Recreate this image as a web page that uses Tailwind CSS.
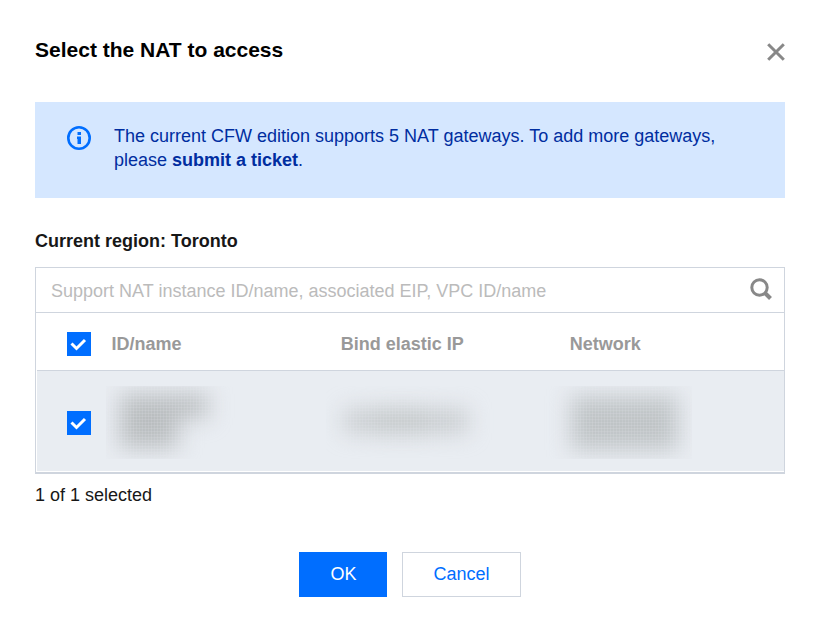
<!DOCTYPE html>
<html lang="en">
<head>
<meta charset="utf-8">
<meta name="viewport" content="width=device-width, initial-scale=1">
<title>Select the NAT to access</title>
<script src="https://cdn.jsdelivr.net/npm/@tailwindcss/browser@4"></script>
</head>
<body class="bg-white font-['Helvetica_Neue','Liberation_Sans',Arial,sans-serif] text-[18px] leading-6 text-[#171717]">
<main role="dialog" aria-labelledby="title" class="px-[35px] pt-9 pb-8">
  <header class="flex items-start justify-between">
    <h1 id="title" class="text-[21px] leading-7 font-bold text-black">Select the NAT to access</h1>
    <button type="button" aria-label="Close" class="mt-[7px] cursor-pointer text-[#888]">
      <svg class="block" width="18" height="18" viewBox="0 0 18 18" fill="none" stroke="currentColor" stroke-width="3"><path d="M1.2 1.2 16.8 16.8M16.8 1.2 1.2 16.8"/></svg>
    </button>
  </header>

  <section class="mt-[38px] flex gap-[23px] bg-[#d5e7ff] px-8 pt-6 pb-[26px] text-[#002da0]">
    <svg class="block shrink-0" width="24" height="24" viewBox="0 0 24 24" fill="none"><circle cx="12" cy="12" r="10.700" stroke="#006eff" stroke-width="2.600"/><path d="M10.500 6h3.500v3h-3.500zM10 10.500h4V18h-3.500v-5H10z" fill="#006eff"/></svg>
    <p class="-mt-0.5">The current CFW edition supports 5 NAT gateways. To add more gateways, please <a href="#" class="font-bold">submit a ticket</a>.</p>
  </section>

  <h2 class="mt-[31px] font-bold">Current region: Toronto</h2>

  <section class="mt-[14px] border border-b-2 border-[#cfd5de]">
    <div class="flex h-[45px] items-center border-b border-[#cfd5de] pr-3 pl-[15px]">
      <input type="search" aria-label="Search NAT instances" placeholder="Support NAT instance ID/name, associated EIP, VPC ID/name" class="h-full min-w-0 flex-1 bg-transparent pt-0.5 outline-none placeholder:text-[#bbb]">
      <button type="button" aria-label="Search" class="cursor-pointer pb-0.5 text-[#888]">
        <svg class="block" width="22" height="22" viewBox="0 0 22 22" fill="none" stroke="currentColor"><circle cx="9.500" cy="9.500" r="7.700" stroke-width="3"/><path d="m15 15 5.500 5.500" stroke-width="4"/></svg>
      </button>
    </div>
    <table class="w-full table-fixed border-collapse text-left">
      <colgroup><col class="w-[60px]"><col><col><col></colgroup>
      <thead>
        <tr class="h-[57px] border-b border-[#cfd5de] text-[#999]">
          <th class="pt-[5px] pl-[30px]">
            <label class="grid size-6"><input type="checkbox" checked aria-label="Select all" class="peer col-start-1 row-start-1 size-6 appearance-none border border-[#cfd5de] bg-white checked:border-[#006eff] checked:bg-[#006eff]"><svg class="pointer-events-none invisible col-start-1 row-start-1 size-6 peer-checked:visible" viewBox="0 0 24 24" fill="none" stroke="#fff" stroke-width="3"><path d="m4.500 11.500 5 5 8.500-8.500"/></svg></label>
          </th>
          <th class="px-[15px] pt-[5px] font-bold">ID/name</th>
          <th class="px-[15px] pt-[5px] font-bold">Bind elastic IP</th>
          <th class="px-[15px] pt-[5px] font-bold">Network</th>
        </tr>
      </thead>
      <tbody>
        <tr class="h-[101px] border-b border-white bg-[#e9edf2]">
          <td class="border-l border-l-white pt-1 pl-[30px]">
            <label class="grid size-6"><input type="checkbox" checked aria-label="Select NAT instance" class="peer col-start-1 row-start-1 size-6 appearance-none border border-[#cfd5de] bg-white checked:border-[#006eff] checked:bg-[#006eff]"><svg class="pointer-events-none invisible col-start-1 row-start-1 size-6 peer-checked:visible" viewBox="0 0 24 24" fill="none" stroke="#fff" stroke-width="3"><path d="m4.500 11.500 5 5 8.500-8.500"/></svg></label>
          </td>
          <td class="pt-1 pl-[9px]">
            <svg class="block" width="150" height="73" viewBox="0 0 150 73" role="img" aria-label="Hidden ID and name">
              <defs>
                <filter id="soft" filterUnits="userSpaceOnUse" x="-40" y="-40" width="260" height="160" color-interpolation-filters="sRGB"><feGaussianBlur stdDeviation="11"/></filter>
                <pattern id="mesh" width="3" height="3" patternUnits="userSpaceOnUse"><path d="M0 .5H3M.5 0V3" stroke="#e9edf2" stroke-opacity=".14"/></pattern>
              </defs>
              <g filter="url(#soft)" fill="#b9bdbf"><path d="M14 8H102V32H72V62H14z"/></g>
              <path d="M0 0H120V43H80V73H0z" fill="url(#mesh)"/>
            </svg>
          </td>
          <td class="pt-1">
            <svg class="block" width="180" height="73" viewBox="0 0 180 73" role="img" aria-label="Hidden elastic IP">
              <g filter="url(#soft)" fill="#b9bdbf"><path d="M18 23H142V47H18z" fill-opacity=".7"/><path d="M50 21H102V49H50z" fill-opacity=".4"/></g>
              <path d="M10 6H160V66H10z" fill="url(#mesh)"/>
            </svg>
          </td>
          <td class="pt-1">
            <svg class="-ml-[14px] block" width="151" height="73" viewBox="0 0 151 73" role="img" aria-label="Hidden network">
              <path d="M30 10H137V64H30z" fill="#bfc4c6" filter="url(#soft)"/>
              <path d="M15 0H151V73H15z" fill="url(#mesh)"/>
            </svg>
          </td>
        </tr>
      </tbody>
    </table>
  </section>
  <p class="mt-[9px]">1 of 1 selected</p>

  <footer class="mt-[45px] flex justify-center gap-[15px]">
    <button type="button" class="h-[45px] cursor-pointer bg-[#006eff] px-[31px] text-white">OK</button>
    <button type="button" class="h-[45px] cursor-pointer border border-[#cfd5de] bg-white px-[30px] text-[#006eff]">Cancel</button>
  </footer>
</main>
</body>
</html>
